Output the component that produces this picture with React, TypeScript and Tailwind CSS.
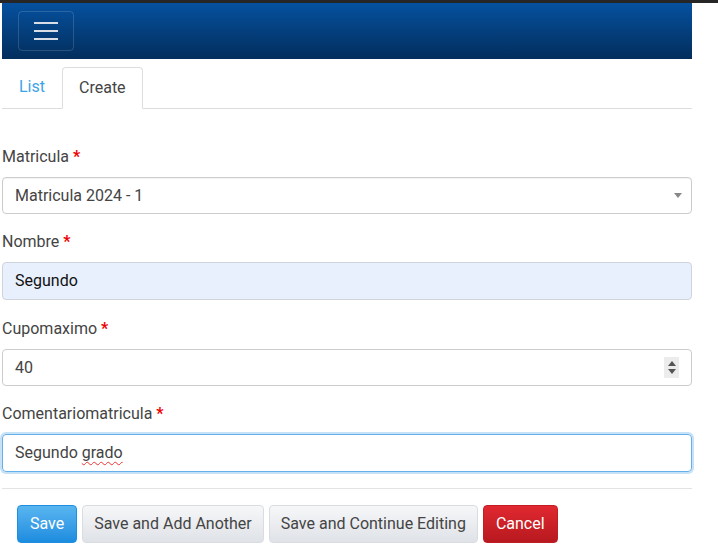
import { useState } from "react";

function Label({ text }: { text: string }) {
  return (
    <div className="h-[22px] leading-[22px] mb-[9px] text-[16px] text-[#444]">
      {text} <span className="text-[#e00] font-bold">*</span>
    </div>
  );
}

export default function App() {
  const [tab] = useState("create");

  return (
    <div className="min-h-[556px] bg-white font-['Roboto',sans-serif] text-[16px]">
      <div className="h-[3px] bg-[#262626]" />
      <div className="w-[690px] ml-[2px]">
        {/* navbar */}
        <div className="h-[56px] bg-gradient-to-b from-[#05519f] to-[#032e5d] pl-[16px] pt-[8px]">
          <button className="w-[56px] h-[40px] rounded-[4px] border border-white/15 flex flex-col items-center justify-center gap-[6px]">
            <span className="block w-[24px] h-[2px] bg-[#d8dde6]" />
            <span className="block w-[24px] h-[2px] bg-[#d8dde6]" />
            <span className="block w-[24px] h-[2px] bg-[#d8dde6]" />
          </button>
        </div>

        {/* tabs */}
        <div className="mt-[8px] flex border-b border-[#ddd] h-[42px]">
          <div className="px-[17px] h-[41px] leading-[40px] text-[#3ea2e8]">List</div>
          <div
            className={
              "px-[16px] h-[42px] leading-[40px] text-[#444] bg-white border border-[#ddd] border-b-white rounded-t-[4px] " +
              (tab === "create" ? "" : "")
            }
          >
            Create
          </div>
        </div>

        {/* form */}
        <div className="pt-[37px]">
          <Label text="Matricula" />
          <div className="h-[37px] border border-[#ccc] rounded-[4px] flex items-center justify-between pl-[12px] pr-[9px] text-[#444] shadow-[inset_0_1px_1px_rgba(0,0,0,0.05)]">
            <span>Matricula 2024 - 1</span>
            <svg width="8" height="5" viewBox="0 0 8 5">
              <path d="M0 0 L8 0 L4 5 Z" fill="#888" />
            </svg>
          </div>

          <div className="mt-[17px]">
            <Label text="Nombre" />
            <div className="h-[38px] border border-[#cfd3da] rounded-[4px] bg-[#e8f0fe] flex items-center pl-[12px] text-[#111]">
              Segundo
            </div>
          </div>

          <div className="mt-[18px]">
            <Label text="Cupomaximo" />
            <div className="h-[37px] border border-[#ccc] rounded-[4px] flex items-center justify-between pl-[12px] pr-[12px] text-[#444]">
              <span>40</span>
              <div className="w-[15px] h-[21px] bg-[#ececec] flex flex-col items-center justify-center gap-[3px]">
                <svg width="8" height="5" viewBox="0 0 8 5">
                  <path d="M0 5 L8 5 L4 0 Z" fill="#555" />
                </svg>
                <svg width="8" height="5" viewBox="0 0 8 5">
                  <path d="M0 0 L8 0 L4 5 Z" fill="#555" />
                </svg>
              </div>
            </div>
          </div>

          <div className="mt-[17px]">
            <Label text="Comentariomatricula" />
            <div className="h-[38px] border border-[#66afe9] rounded-[4px] ring-[2px] ring-[#c5e2f7] flex items-center pl-[12px] text-[#444]">
              <span>
                Segundo{" "}
                <span className="underline decoration-wavy decoration-[#e33] decoration-[1px] underline-offset-[3px]">
                  grado
                </span>
              </span>
            </div>
          </div>

          <div className="mt-[16px] border-t border-[#e3e3e3]" />

          <div className="pt-[16px] pl-[15px] flex gap-[5px]">
            <button className="h-[38px] px-[12px] rounded-[4px] text-white bg-gradient-to-b from-[#58b5f0] to-[#1b8cdf] border border-[#1e8fdf]">
              Save
            </button>
            <button className="h-[38px] px-[11px] rounded-[4px] text-[#444] bg-gradient-to-b from-[#f6f7f9] to-[#dfe2e7] border border-[#d9dde2]">
              Save and Add Another
            </button>
            <button className="h-[38px] px-[11px] rounded-[4px] text-[#444] bg-gradient-to-b from-[#f6f7f9] to-[#dfe2e7] border border-[#d9dde2]">
              Save and Continue Editing
            </button>
            <button className="h-[38px] px-[12px] rounded-[4px] text-white bg-gradient-to-b from-[#e12831] to-[#b7191f] border border-[#c11d24]">
              Cancel
            </button>
          </div>
        </div>
      </div>
    </div>
  );
}
